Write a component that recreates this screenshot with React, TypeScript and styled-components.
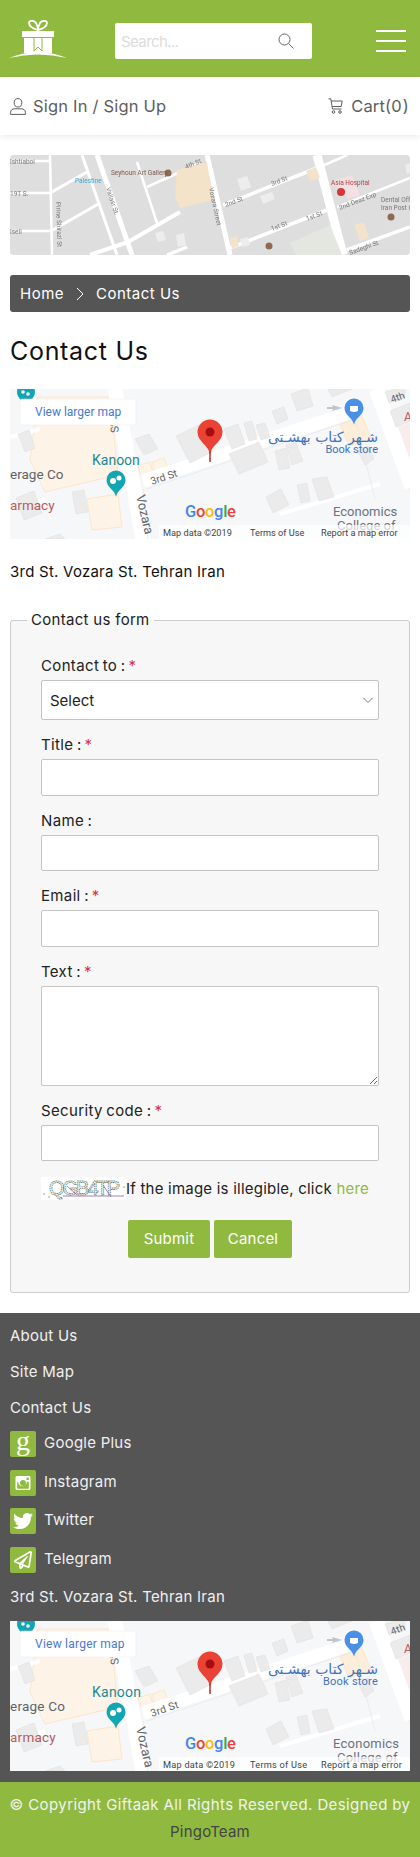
import styled, { createGlobalStyle } from "styled-components";
import { FaTwitter, FaRegPaperPlane } from "react-icons/fa";

const GREEN = "#8fba3f";
const DARK = "#555555";

const GlobalStyle = createGlobalStyle`
  html, body { margin: 0; padding: 0; background: #fff; }
  body { font-family: Inter, "Open Sans", "Liberation Sans", sans-serif; color: #222; }
  * { box-sizing: border-box; }
`;

const TopBar = styled.header`
  height: 77px;
  background: ${GREEN};
  display: flex;
  align-items: center;
  padding: 5px 14px 0 9px;
`;
const LogoWrap = styled.div`
  display: flex;
  margin-top: -4px;
`;
const SearchBox = styled.div`
  width: 197px;
  height: 36px;
  margin-left: 48px;
  background: #fff;
  border-radius: 2px;
  display: flex;
  align-items: center;
  justify-content: space-between;
  padding: 0 18px 0 6px;
`;
const SearchInput = styled.input`
  border: 0;
  outline: 0;
  padding: 0;
  width: 130px;
  font: 400 15px Inter, sans-serif;
  letter-spacing: -0.6px;
  background: transparent;
  &::placeholder { color: #dcdcdc; }
`;
const Burger = styled.div`
  margin-left: auto;
  width: 30px;
  display: flex;
  flex-direction: column;
  gap: 8px;
  span { height: 2px; background: #fff; display: block; }
`;
const AccountBar = styled.div`
  height: 58px;
  display: flex;
  align-items: center;
  justify-content: space-between;
  padding: 0 11px 0 10px;
  box-shadow: 0 2px 6px rgba(0, 0, 0, 0.08);
  font-size: 16.5px;
  letter-spacing: 0.2px;
  color: #5d5d5d;
`;
const AccountLink = styled.a`
  display: flex;
  align-items: center;
  white-space: pre;
  word-spacing: -4px;
  gap: ${(p: { $gap: number }) => p.$gap}px;
`;
const SignLabel = styled.span`
  word-spacing: 0;
`;
const Main = styled.main`
  padding: 20px 10px 20.5px;
`;
const Banner = styled.div`
  height: 100px;
  border-radius: 4px;
  overflow: hidden;
  svg { display: block; }
`;
const Breadcrumb = styled.nav`
  height: 37px;
  margin-top: 20px;
  background: ${DARK};
  border-radius: 3px;
  display: flex;
  align-items: center;
  gap: 12px;
  padding: 0 10px;
  color: #fff;
  font-size: 15px;
  letter-spacing: 0.5px;
`;
const PageTitle = styled.h1`
  margin: 24px 0 0;
  height: 30px;
  font-size: 25px;
  line-height: 30px;
  font-weight: 400;
  letter-spacing: 0.7px;
  color: #111;
`;
const MapFrame = styled.div`
  height: 150px;
  margin-top: ${(p: { $top: number }) => p.$top}px;
  overflow: hidden;
  svg { display: block; }
`;
const Address = styled.p`
  margin: 22px 0 0;
  font-size: 15px;
  line-height: 22px;
  letter-spacing: 0.24px;
  color: #111;
`;
const FormBox = styled.fieldset`
  margin: 26px 0 0;
  padding: 24px 30px 34px;
  border: 1px solid #ccc;
  border-radius: 3px;
  background: #f7f7f7;
  min-width: 0;
`;
const Legend = styled.legend`
  margin-left: -14px;
  padding: 0 4px;
  font-size: 15px;
  line-height: 22px;
  letter-spacing: 0.3px;
  color: #222;
`;
const Field = styled.div`
  margin-bottom: 14px;
`;
const Label = styled.label`
  display: block;
  height: 22px;
  margin-bottom: 3px;
  font-size: 15px;
  line-height: 22px;
  letter-spacing: 0.35px;
  word-spacing: -1px;
  color: #222;
  em { color: #d9323c; font-style: normal; margin-left: 3px; }
`;
const TextInput = styled.input`
  display: block;
  width: 100%;
  height: 36.5px;
  background: #fff;
  border: 1px solid #c4c4c4;
  border-radius: 2px;
  outline: 0;
`;
const TextBox = styled.textarea`
  display: block;
  width: 100%;
  height: 100px;
  background: #fff;
  border: 1px solid #c4c4c4;
  border-radius: 2px;
  outline: 0;
`;
const SelectWrap = styled.div`
  position: relative;
  height: 40px;
  svg { position: absolute; right: 6px; top: 17px; }
`;
const Select = styled.select`
  width: 100%;
  height: 40px;
  appearance: none;
  background: #fff;
  border: 1px solid #c4c4c4;
  border-radius: 2px;
  padding: 0 8px;
  font: 400 15px Inter, sans-serif;
  color: #222;
`;
const CaptchaRow = styled.div`
  display: flex;
  align-items: center;
  margin-top: 15.5px;
  height: 23px;
  font-size: 15px;
  letter-spacing: 0.22px;
  white-space: pre;
  color: #222;
  a { color: ${GREEN}; }
  svg { flex: none; }
`;
const ButtonRow = styled.div`
  display: flex;
  justify-content: center;
  gap: 4px;
  margin-top: 20px;
`;
const ActionButton = styled.button`
  height: 38px;
  width: ${(p: { $w: number }) => p.$w}px;
  border: 0;
  border-radius: 2px;
  background: ${GREEN};
  color: #fff;
  font: 400 15px Inter, sans-serif;
  letter-spacing: 0.2px;
`;
const Footer = styled.footer`
  background: ${DARK};
  padding: 5px 10px 11px;
  color: #f0f0f0;
  font-size: 15px;
  letter-spacing: 0.24px;
`;
const FooterLink = styled.div`
  height: 36px;
  line-height: 36px;
`;
const SocialList = styled.div`
  display: flex;
  flex-direction: column;
  gap: 12.67px;
  margin-top: 5px;
`;
const SocialRow = styled.div`
  display: flex;
  align-items: center;
  gap: 8px;
  height: 26px;
`;
const SocialLabel = styled.span`
  margin-top: -3px;
`;
const SocialIcon = styled.span`
  width: 26px;
  height: 26px;
  flex: none;
  border-radius: 2px;
  background: ${GREEN};
  color: #fff;
  display: flex;
  align-items: center;
  justify-content: center;
`;
const GooglePlusGlyph = styled.span`
  font: 400 28px/26px "Liberation Serif", serif;
  margin-top: -7px;
`;
const FooterAddress = styled.div`
  margin-top: 13px;
  height: 22px;
  line-height: 22px;
`;
const CopyBar = styled.div`
  height: 75px;
  background: ${GREEN};
  text-align: center;
  padding-top: 9px;
  font-size: 15px;
  line-height: 27px;
  letter-spacing: 0.4px;
  color: #f2f2f2;
  white-space: nowrap;
  a { color: #444; display: block; letter-spacing: 0.2px; }
`;

const Logo = () => (
    <svg width="58" height="38" viewBox="0 0 58 38">
        <path d="M0 38 Q29 26 58 38 Q29 31 0 38Z" fill="#fff" />
        <path d="M13 11h32v6H13zM15 18h28v15H15z" fill="#fff" />
        <path d="M25 18v13l4-4 4 4V18" fill="none" stroke={GREEN} strokeWidth="1" />
        <path d="M29 10 C24 9 20 6 20 3 C20 0 25 0 27 3 L29 8 L31 3 C33 0 38 0 38 3 C38 6 34 9 29 10Z" fill="none" stroke="#fff" strokeWidth="1.8" />
    </svg>
);

const SearchIcon = () => (
    <svg width="16" height="16" viewBox="0 0 16 16" fill="none" stroke="#666" strokeWidth="1">
        <circle cx="6.5" cy="6.5" r="5.5" />
        <path d="M10.5 10.5l5 5" />
    </svg>
);

const UserIcon = () => (
    <svg width="16" height="17" viewBox="0 0 16 17" fill="none" stroke="#5d5d5d" strokeWidth="1">
        <ellipse cx="8" cy="4.8" rx="3.8" ry="4.2" />
        <path d="M.6 16.4v-2.2c0-2 1.800-3.400 3.900-3.400h7c2.100 0 3.900 1.400 3.900 3.400v2.200z" />
    </svg>
);

const CartIcon = () => (
    <svg width="15" height="16" viewBox="0 0 15 16" fill="none" stroke="#5d5d5d" strokeWidth="1">
        <path d="M.5.8h2.300l1.700 10.200h9" />
        <path d="M3.200 3h11l-1 5.500H4.100" />
        <circle cx="5.500" cy="14" r="1.300" />
        <circle cx="12" cy="14" r="1.300" />
    </svg>
);

const Chevron = () => (
    <svg width="8" height="14" viewBox="0 0 8 14" fill="none" stroke="#fff" strokeWidth="1">
        <path d="M1 1l6 6-6 6" />
    </svg>
);

const InstagramIcon = () => (
    <svg width="16" height="16" viewBox="0 0 16 16">
        <path fillRule="evenodd" fill="#fff" d="M2 1h12a1.500 1.500 0 0 1 1.500 1.500v11a1.500 1.500 0 0 1-1.500 1.500H2a1.500 1.500 0 0 1-1.500-1.500v-11A1.500 1.500 0 0 1 2 1zm.2 5.800v6.400c0 .3.200.5.500.5h10.600c.3 0 .5-.2.500-.5V6.800h-1.900a4.300 4.300 0 1 1-8.800 0zM8 5a3 3 0 1 0 0 6 3 3 0 0 0 0-6zm3.500-2.500v2.400h2.300V2.500z" />
    </svg>
);

const BannerMap = () => {
    const roads: [number, number, number, number, number][] = [
        [0, 6, 40, 6, 2.5], [40, 0, 42, 100, 2.5], [0, 38, 40, 38, 2.5], [0, 76, 40, 76, 2.5],
        [40, 38, 77, 17, 3], [43, 75, 90, 48, 3], [72, 0, 107, 100, 3], [87, 0, 122, 100, 5],
        [80, 100, 118, 87, 4], [118, 87, 170, 57, 4], [127, 7, 147, 68, 2.5], [137, 32, 190, 8, 2.5], [197, 0, 220, 100, 5],
        [213, 50, 307, 13, 3.5], [307, 0, 333, 100, 9], [310, 12, 337, 0, 2.5], [220, 93, 317, 55, 3.5],
        [327, 52, 400, 23, 2.5], [337, 95, 400, 72, 3.5], [157, 100, 177, 92, 3.5],
    ];
    return (
        <svg width="400" height="100" viewBox="0 0 400 100">
            <defs>
                <filter id="soft"><feGaussianBlur stdDeviation="0.4" /></filter>
            </defs>
            <rect width="400" height="100" fill="#dedede" />
            {roads.map(([x1, y1, x2, y2, w], i) => (
                <line key={i} x1={x1} y1={y1} x2={x2} y2={y2} stroke="#fff" strokeWidth={w} />
            ))}
            <path d="M167 15l30-8 6 38-33 8-5-11z" fill="#f3e3c8" />
            <path d="M296 16l10-4 4 11-10 3zM344 70l10-3 5 16-9 3zM220 83l7-2 2 10-7 3z" fill="#f3e3c8" />
            <path d="M227 24l10-3 4 11-10 4zM250 41l12-4 3 7-12 5zM145 78l8-2 3 9-8 2zM166 80l8-2 2 12-8 2zM230 84l8-2 2 8-8 2zM395 10l5-2v10l-3 1z" fill="#ededed" />
            <path d="M280 88l40-18 12 30h-46z" fill="#e4e6e0" />
            <path d="M322 26l20-6 8 20-12 4z" fill="#f2e0e3" />
            <circle cx="331" cy="37" r="4" fill="#d8343a" />
            <circle cx="158" cy="18" r="3.500" fill="#8f6a50" />
            <circle cx="259" cy="91" r="3.500" fill="#8f6a50" />
            <circle cx="381" cy="62" r="3.500" fill="#8f6a50" />
            <g fontFamily="Roboto, sans-serif" fontSize="6.500" fill="#777" filter="url(#soft)">
                <text x="0" y="9">Ishtiaboi</text>
                <text x="0" y="41">19T S.</text>
                <text x="0" y="79">Iseli</text>
                <text x="101" y="20" fill="#7a5c4a">Seyhoun Art Gallery</text>
                <text x="65" y="28" fill="#39a8d8">Palestine</text>
                <text x="321" y="30" fill="#b04040">Asia Hospital</text>
                <text x="371" y="47">Dental Off</text>
                <text x="371" y="55">Iran Post O</text>
                <text transform="translate(96 33) rotate(72)">Vallasr St.</text>
                <text transform="translate(199 33) rotate(78)">Vozara Street</text>
                <text transform="translate(46 47) rotate(88)">Pirine Shirazi St</text>
                <text transform="translate(176 14) rotate(-22)">4th St</text>
                <text transform="translate(262 31) rotate(-21)">3rd St</text>
                <text transform="translate(216 52) rotate(-21)">2nd St</text>
                <text transform="translate(262 76) rotate(-21)">1st St</text>
                <text transform="translate(297 66) rotate(-21)">1st St</text>
                <text transform="translate(330 55) rotate(-21)">2nd Deaz Exp</text>
                <text transform="translate(340 100) rotate(-20)">Sadeghi St</text>
            </g>
        </svg>
    );
};

const Pin = ({ x, y, r, color }: { x: number; y: number; r: number; color: string }) => (
    <path
        d={`M${x} ${y + r * 1.75} C${x - r * 0.15} ${y + r},${x - r} ${y + r * 0.8},${x - r} ${y} A${r} ${r} 0 1 1 ${x + r} ${y} C${x + r} ${y + r * 0.8},${x + r * 0.15} ${y + r},${x} ${y + r * 1.75}Z`}
        fill={color}
    />
);

// same little map is used in the page body and in the footer
const GoogleMap = () => {
    const blocks = [
        "M8 45l11-4 6 18-10 4z", "M6 109l18-7 8 22-18 7z", "M62 103l12-2 4 22-12 2z",
        "M166 47l25-12 11 28-22 11z", "M125 50l14-5 9 15-14 6z", "M214 40l14-5 7 20-13 5z", "M234 34l8-2 5 18-8 2z",
        "M246 36l9-2 5 14-9 3z", "M262 22l12-4 4 12-11 5z", "M281 5l17-6 5 18-16 5z", "M318 0h24l-20 8z",
        "M219 65l30-12 9 20-29 12z", "M265 62l11-3 4 20-11 2z", "M276 56l10-2 7 18-11 4z", "M348 62l10-5 6 13-9 6z",
        "M256 108l15-8 8 16-16 8z", "M287 96l10-2 3 18-9 2z", "M302 90l15-2 7 20-15 4z", "M375 3l20-5v10l-16 6z", "M380 22l20-8v18l-14 6z",
        "M35 150l15-5 5 5z",
    ];
    return (
        <svg width="400" height="150" viewBox="0 0 400 150">
            <rect width="400" height="150" fill="#f6f7f9" />
            <path d="M25 34l2-26 73 0 8 78-73 17-15-32z" fill="#fef3e7" stroke="#fde6cc" />
            <path d="M77 110l31-5 4 33-30 3z" fill="#fef3e7" stroke="#fde6cc" />
            <path d="M128 77l12-4 3 10-12 4zM142 73l12-4 4 12-13 3z" fill="#fef3e7" stroke="#fde6cc" />
            <path d="M330 35l22-8 9 22-22 8z" fill="#fdeed9" stroke="#fde6cc" />
            <path d="M375 45l25-12v70z" fill="#f9ecec" />
            <path d="M133 92L345 22" stroke="#fff" strokeWidth="13" />
            <path d="M105 0L133 150" stroke="#fff" strokeWidth="15" />
            <path d="M366 0L402 98" stroke="#fff" strokeWidth="15" />
            <path d="M0 48l30-8M0 120l35-10M270 125l100-30" stroke="#fff" strokeWidth="4" />
            <path d="M133 100l5 50M137 100L345 30M345 30l20 80" fill="none" stroke="#e6e8ea" strokeWidth="0.8" />
            {blocks.map((d, i) => (
                <path key={i} d={d} fill="#ebebeb" stroke="#e0e0e0" strokeWidth="0.6" />
            ))}
            <path d="M322 16l10 3-10 3 1-2h-6v-2h6z" fill="#bcc4cc" />
            <Pin x={16} y={3} r={9} color="#12a5b2" />
            <circle cx="13" cy="3" r="1.800" fill="#fff" /><circle cx="18" cy="5" r="1.800" fill="#fff" />
            <Pin x={106} y={91} r={9.500} color="#12a5b2" />
            <circle cx="103" cy="92" r="3" fill="#fff" /><circle cx="109" cy="89" r="2.500" fill="#fff" />
            <Pin x={344} y={19} r={9.500} color="#4a90e8" />
            <path d="M340 17h8v5q-4 2-8 0z" fill="#fff" />
            <Pin x={200} y={43} r={12.500} color="#ea4335" />
            <path d="M200 62v11" stroke="#c5281c" strokeWidth="1.500" />
            <circle cx="200" cy="43" r="4.500" fill="#a50e0e" />
            <g fontFamily="Roboto, sans-serif">
                <text x="82" y="76" fontSize="14" fill="#1a8a94">Kanoon</text>
                <text x="0" y="90" fontSize="13.500" fill="#5f6368">erage Co</text>
                <text x="0" y="121" fontSize="13.500" fill="#b35c5c">armacy</text>
                <text fontSize="10.500" fill="#5f6368" transform="translate(142 96) rotate(-19)">3rd St</text>
                <text fontSize="13" fill="#5f6368" transform="translate(126 107) rotate(77)">Vozara</text>
                <text fontSize="11" fill="#5f6368" transform="translate(109 43) rotate(-100)">St</text>
                <text fontSize="10" fill="#5f6368" transform="translate(382 14) rotate(-20)">4th</text>
                <text x="394" y="32" fontSize="12" fill="#b35c5c">A</text>
                <text x="368" y="53" textAnchor="start" fontSize="14" fill="#4472b8" fontFamily="'DejaVu Sans', sans-serif" direction="rtl">شـهر کتاب بهشـتی</text>
                <text x="368" y="64" textAnchor="end" fontSize="11" fill="#4472b8">Book store</text>
                <text x="323" y="127" fontSize="13" fill="#6b7280">Economics</text>
                <text x="327" y="141" fontSize="13" fill="#6b7280">College of</text>
                <text x="175" y="128" fontSize="16.500" fontWeight="500" letterSpacing="-0.3">
                    <tspan fill="#4285f4">G</tspan><tspan fill="#ea4335">o</tspan><tspan fill="#fbbc05">o</tspan>
                    <tspan fill="#4285f4">g</tspan><tspan fill="#34a853">l</tspan><tspan fill="#ea4335">e</tspan>
                </text>
                <rect x="149" y="136" width="251" height="14" fill="#fff" fillOpacity="0.7" />
                <g fontSize="9.200" fill="#444">
                    <text x="153" y="146.500">Map data ©2019</text>
                    <text x="240" y="146.500">Terms of Use</text>
                    <text x="311" y="146.500">Report a map error</text>
                </g>
                <rect x="10" y="10" width="116" height="26" rx="2" fill="#fff" stroke="#e8e8e8" strokeWidth="0.5" />
                <text x="25" y="27" fontSize="12" fill="#4a78c9">View larger map</text>
            </g>
        </svg>
    );
};

const Captcha = () => (
    <svg width="85" height="23" viewBox="0 0 85 23">
        <rect width="85" height="23" fill="#fff" />
        <text x="8" y="18" fontFamily="'Liberation Sans', sans-serif" fontSize="20" fill="none" letterSpacing="-2" stroke="#6f8272" strokeWidth="0.9" strokeDasharray="1.500 0.700">QGB4TP</text>
        <path d="M22 19h61M26 9l10 9M62 8l8 12" stroke="#9a5a9c" strokeWidth="0.8" fill="none" />
        <circle cx="3" cy="17" r="0.700" fill="#777" /><circle cx="8" cy="20" r="0.700" fill="#777" /><circle cx="83" cy="10" r="0.700" fill="#777" />
    </svg>
);

const Required = () => <em>*</em>;

export default function App() {
    return (
        <>
            <GlobalStyle />
            <TopBar>
                <LogoWrap><Logo /></LogoWrap>
                <SearchBox>
                    <SearchInput placeholder="Search..." />
                    <SearchIcon />
                </SearchBox>
                <Burger><span /><span /><span /></Burger>
            </TopBar>
            <AccountBar>
                <AccountLink $gap={7}><UserIcon /><SignLabel>Sign In / Sign Up</SignLabel></AccountLink>
                <AccountLink $gap={8}><CartIcon />Cart(0 )</AccountLink>
            </AccountBar>
            <Main>
                <Banner><BannerMap /></Banner>
                <Breadcrumb>Home <Chevron /> Contact Us</Breadcrumb>
                <PageTitle>Contact Us</PageTitle>
                <MapFrame $top={23}><GoogleMap /></MapFrame>
                <Address>3rd St. Vozara St. Tehran Iran</Address>
                <FormBox>
                    <Legend>Contact us form</Legend>
                    <Field>
                        <Label>Contact to :<Required /></Label>
                        <SelectWrap>
                            <Select><option>Select</option></Select>
                            <svg width="10" height="7" viewBox="0 0 10 7" fill="none" stroke="#777"><path d="M.5 1l4.500 4.500L9.500 1" /></svg>
                        </SelectWrap>
                    </Field>
                    <Field><Label>Title :<Required /></Label><TextInput /></Field>
                    <Field><Label>Name :</Label><TextInput /></Field>
                    <Field><Label>Email :<Required /></Label><TextInput /></Field>
                    <Field><Label>Text :<Required /></Label><TextBox /></Field>
                    <Field><Label>Security code :<Required /></Label><TextInput /></Field>
                    <CaptchaRow><Captcha />If the image is illegible, click <a>here</a></CaptchaRow>
                    <ButtonRow>
                        <ActionButton $w={82}>Submit</ActionButton>
                        <ActionButton $w={78}>Cancel</ActionButton>
                    </ButtonRow>
                </FormBox>
            </Main>
            <Footer>
                <FooterLink>About Us</FooterLink>
                <FooterLink>Site Map</FooterLink>
                <FooterLink>Contact Us</FooterLink>
                <SocialList>
                    <SocialRow><SocialIcon><GooglePlusGlyph>g</GooglePlusGlyph></SocialIcon><SocialLabel>Google Plus</SocialLabel></SocialRow>
                    <SocialRow><SocialIcon><InstagramIcon /></SocialIcon><SocialLabel>Instagram</SocialLabel></SocialRow>
                    <SocialRow><SocialIcon><FaTwitter size={20} /></SocialIcon><SocialLabel>Twitter</SocialLabel></SocialRow>
                    <SocialRow><SocialIcon><FaRegPaperPlane size={18} /></SocialIcon><SocialLabel>Telegram</SocialLabel></SocialRow>
                </SocialList>
                <FooterAddress>3rd St. Vozara St. Tehran Iran</FooterAddress>
                <MapFrame $top={13}><GoogleMap /></MapFrame>
            </Footer>
            <CopyBar>
                © Copyright Giftaak All Rights Reserved. Designed by
                <a>PingoTeam</a>
            </CopyBar>
        </>
    );
}
